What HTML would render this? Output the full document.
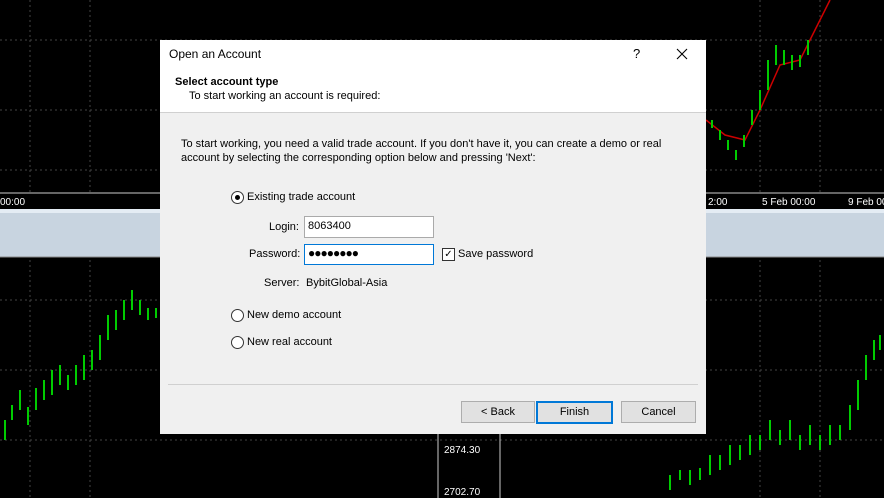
<!DOCTYPE html>
<html><head><style>
body{margin:0;width:884px;height:498px;overflow:hidden;background:#000;font-family:"Liberation Sans",Arial,sans-serif;position:relative}
.abs{position:absolute}
.t{font-size:11px;color:#000}
</style></head><body>
<svg class="abs" style="left:0;top:0" width="884" height="498">
<g stroke="#444" stroke-dasharray="2,3">
<line x1="0" y1="40" x2="884" y2="40"/><line x1="0" y1="110" x2="884" y2="110"/><line x1="0" y1="170" x2="884" y2="170"/>
<line x1="0" y1="300" x2="884" y2="300"/><line x1="0" y1="370" x2="884" y2="370"/><line x1="0" y1="440" x2="884" y2="440"/>
<line x1="30" y1="0" x2="30" y2="498"/><line x1="90" y1="0" x2="90" y2="498"/><line x1="760" y1="0" x2="760" y2="498"/><line x1="820" y1="0" x2="820" y2="498"/>
</g>
<rect x="0" y="193" width="884" height="16" fill="#000"/>
<line x1="0" y1="193" x2="884" y2="193" stroke="#ccc"/>
<text x="0" y="205" fill="#fff" font-size="10" font-family="Liberation Sans">00:00</text>
<text x="708" y="205" fill="#fff" font-size="10" font-family="Liberation Sans">2:00</text>
<text x="762" y="205" fill="#fff" font-size="10" font-family="Liberation Sans">5 Feb 00:00</text>
<text x="848" y="205" fill="#fff" font-size="10" font-family="Liberation Sans">9 Feb 00</text>
<rect x="0" y="209" width="884" height="48" fill="#c8d4e0"/>
<rect x="0" y="209" width="884" height="4" fill="#e4ecf4"/>
<line x1="0" y1="257" x2="884" y2="257" stroke="#888"/>
<line x1="438" y1="258" x2="438" y2="498" stroke="#ccc"/>
<line x1="500" y1="258" x2="500" y2="498" stroke="#ccc"/>
<text x="444" y="453" fill="#fff" font-size="10" font-family="Liberation Sans">2874.30</text>
<text x="444" y="495" fill="#fff" font-size="10" font-family="Liberation Sans">2702.70</text>
<path d="M706 120 L725 135 L745 140 L760 110 L780 65 L800 60 L815 30 L830 0" stroke="#c00" fill="none" stroke-width="1.5"/>
<g stroke="#0c0" stroke-width="2">
<path d="M5 440v-20M12 420v-15M20 410v-20M28 425v-18M36 410v-22M44 400v-20M52 395v-25M60 385v-20M68 390v-15M76 385v-20M84 380v-25M92 370v-20M100 360v-25M108 340v-25M116 330v-20M124 320v-20M132 310v-20M140 315v-15M148 320v-12M156 318v-10"/>
<path d="M712 120v8M720 130v10M728 140v10M736 150v10M744 135v12M752 110v15M760 90v20M768 60v30M776 45v20M784 50v15M792 55v15M800 55v12M808 40v15"/>
<path d="M670 490v-15M680 480v-10M690 485v-15M700 480v-12M710 475v-20M720 470v-15M730 465v-20M740 460v-15M750 455v-20M760 450v-15M770 440v-20M780 445v-15M790 440v-20M800 450v-15M810 445v-20M820 450v-15M830 445v-20M840 440v-15M850 430v-25M858 410v-30M866 380v-25M874 360v-20M880 350v-15"/>
</g>
</svg>
<div class="abs" style="left:160px;top:40px;width:546px;height:394px;background:#f0f0f0">
 <div class="abs" style="left:0;top:0;width:546px;height:72px;background:#fff;border-bottom:1px solid #d0d0d0"></div>
 <div class="abs" style="left:9px;top:7px;font-size:12px">Open an Account</div>
 <div class="abs" style="left:473px;top:6px;font-size:13px">?</div>
 <svg class="abs" style="left:516px;top:8px" width="12" height="12"><path d="M1 1L11 11M11 1L1 11" stroke="#000" stroke-width="1.1"/></svg>
 <div class="abs t" style="left:15px;top:36px;font-weight:bold">Select account type</div>
 <div class="abs t" style="left:29px;top:50px">To start working an account is required:</div>
 <div class="abs t" style="left:21px;top:97px;line-height:14px">To start working, you need a valid trade account. If you don't have it, you can create a demo or real<br>account by selecting the corresponding option below and pressing 'Next':</div>
 <div class="abs" style="left:71px;top:151px;width:11px;height:11px;border:1px solid #333;border-radius:50%;background:#fff"><div style="margin:3px;width:5px;height:5px;border-radius:50%;background:#000"></div></div>
 <div class="abs t" style="left:87px;top:151px">Existing trade account</div>
 <div class="abs t" style="left:109px;top:181px">Login:</div>
 <div class="abs" style="left:144px;top:176px;width:128px;height:20px;border:1px solid #aaa;background:#fff"><span class="t" style="position:absolute;left:3px;top:3px">8063400</span></div>
 <div class="abs t" style="left:89px;top:208px">Password:</div>
 <div class="abs" style="left:144px;top:204px;width:128px;height:19px;border:1px solid #0078d7;background:#fff"><span style="position:absolute;left:3px;top:1px;font-size:12px;letter-spacing:-1px">●●●●●●●●</span></div>
 <div class="abs" style="left:282px;top:208px;width:11px;height:11px;border:1px solid #333;background:#fff;font-size:10px;line-height:11px;text-align:center">✓</div>
 <div class="abs t" style="left:298px;top:208px">Save password</div>
 <div class="abs t" style="left:104px;top:237px">Server:</div>
 <div class="abs t" style="left:146px;top:237px">BybitGlobal-Asia</div>
 <div class="abs" style="left:71px;top:269px;width:11px;height:11px;border:1px solid #333;border-radius:50%;background:#fff"></div>
 <div class="abs t" style="left:87px;top:269px">New demo account</div>
 <div class="abs" style="left:71px;top:296px;width:11px;height:11px;border:1px solid #333;border-radius:50%;background:#fff"></div>
 <div class="abs t" style="left:87px;top:296px">New real account</div>
 <div class="abs" style="left:8px;top:344px;width:530px;border-top:1px solid #d0d0d0"></div>
 <div class="abs t" style="left:301px;top:361px;width:72px;height:20px;border:1px solid #adadad;background:#e1e1e1;text-align:center;line-height:20px">&lt; Back</div>
 <div class="abs t" style="left:376px;top:361px;width:73px;height:19px;border:2px solid #0078d7;background:#e1e1e1;text-align:center;line-height:19px">Finish</div>
 <div class="abs t" style="left:461px;top:361px;width:73px;height:20px;border:1px solid #adadad;background:#e1e1e1;text-align:center;line-height:20px">Cancel</div>
</div>
</body></html>
